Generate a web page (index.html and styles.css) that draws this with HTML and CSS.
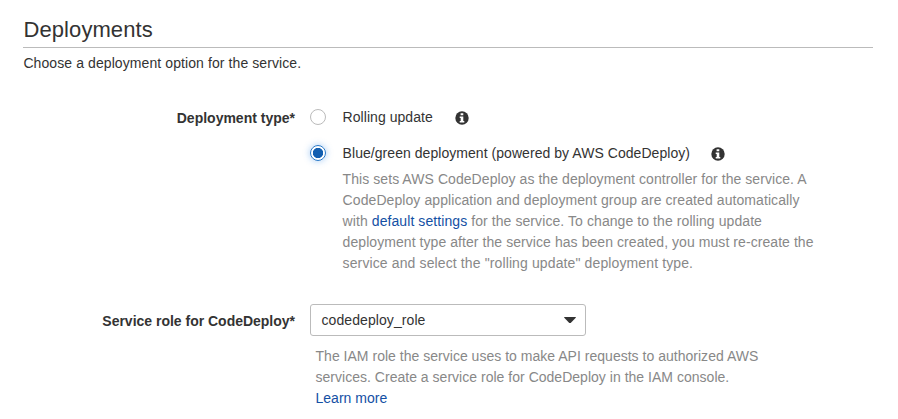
FILE: index.html
```html
<!DOCTYPE html>
<html lang="en">
<head>
<meta charset="utf-8">
<title>Deployments</title>
<link rel="stylesheet" href="styles.css">
</head>
<body>
<main class="page">
  <h1 class="title">Deployments</h1>
  <p class="intro">Choose a deployment option for the service.</p>
  <div class="row type-row">
    <div class="label">Deployment type*</div>
    <div class="field">
      <label class="option"><span class="radio"></span><span class="option-text">Rolling update</span>
        <svg class="info" viewBox="0 0 14 14"><circle cx="7" cy="7" r="6.7" fill="#333"/><path d="M5.6 2.2h2.7v2.1H5.6zM4.7 5.4h3.6v4.6h1v1.6H4.7V10h1V7h-1z" fill="#fff"/></svg></label>
      <label class="option second"><span class="radio checked"></span><span class="option-text">Blue/green deployment (powered by AWS CodeDeploy)</span>
        <svg class="info" viewBox="0 0 14 14"><circle cx="7" cy="7" r="6.7" fill="#333"/><path d="M5.6 2.2h2.7v2.1H5.6zM4.7 5.4h3.6v4.6h1v1.6H4.7V10h1V7h-1z" fill="#fff"/></svg></label>
      <div class="help">
        <div>This sets AWS CodeDeploy as the deployment controller for the service. A</div>
        <div class="wide">CodeDeploy application and deployment group are created automatically</div>
        <div class="wide">with <a>default settings</a> for the service. To change to the rolling update</div>
        <div>deployment type after the service has been created, you must re-create the</div>
        <div class="last">service and select the "rolling update" deployment type.</div>
      </div>
    </div>
  </div>
  <div class="row role-row">
    <div class="label">Service role for CodeDeploy*</div>
    <div class="field">
      <div class="select"><span>codedeploy_role</span><svg class="caret" viewBox="0 0 12 6"><path d="M0.5 0h11L12 .5 6.700 6H5.300L0 .5z" fill="#333"/></svg></div>
      <div class="help role-help">
        <div>The IAM role the service uses to make API requests to authorized AWS</div>
        <div>services. Create a service role for CodeDeploy in the IAM console.</div>
        <div><a>Learn more</a></div>
      </div>
    </div>
  </div>
</main>
</body>
</html>
```
FILE: styles.css
```css
* { box-sizing: border-box; }
body { margin: 0; background: #fff; color: #333; font: 14px/21px "Liberation Sans", Arial, sans-serif; white-space: nowrap; overflow: hidden; }
.page { padding: 13px 25px 0 23px; height: 419px; }
.title { margin: 0; height: 35px; padding-left: 0.5px; border-bottom: 1px solid #bbb; font-size: 22px; line-height: 33px; font-weight: 400; letter-spacing: 0.08px; }
.intro { margin: 5px 0 0; padding-left: 0.4px; letter-spacing: 0.09px; }
.row { display: grid; grid-template-columns: 272px 1fr; column-gap: 15px; }
.type-row { margin-top: 33px; }
.role-row { margin-top: 30px; }
.label { padding-top: 1px; text-align: right; font-weight: 700; }
.option { display: flex; align-items: center; height: 21px; }
.second { margin-top: 15px; }
.option-text { letter-spacing: 0.05px; }
.radio { width: 16px; height: 16px; border: 1px solid #bbb; border-radius: 50%; margin: 0 16.6px 2px 0; }
.checked { border-color: #2878c8; background: radial-gradient(circle, #125eb0 4.8px, #fff 5.5px); box-shadow: 0 0 6px 1px rgba(60, 140, 230, 0.35); }
.info { width: 14px; height: 14px; margin-left: 22.3px; }
.second .info { margin-left: 20.5px; }
.help { margin: 5px 0 0 32.6px; color: #888; letter-spacing: 0.065px; }
.help .wide { letter-spacing: 0.08px; }
.help .last { letter-spacing: 0.12px; }
.help a { color: #1450a4; }
.select { display: flex; align-items: center; justify-content: space-between; width: 276px; height: 32px; padding: 0 9px 0 10.5px; border: 1px solid #bbb; border-radius: 3px; letter-spacing: 0.08px; }
.caret { width: 12px; height: 6px; }
.role-row .label { padding-top: 7px; letter-spacing: -0.01px; }
.role-help { margin: 10px 0 0 5.5px; letter-spacing: 0.02px; }
```
